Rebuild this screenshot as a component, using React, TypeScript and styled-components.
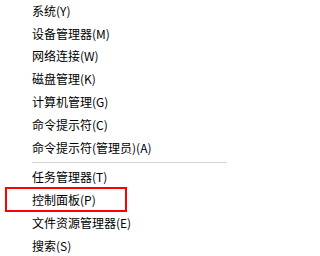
import React from 'react';
import styled, { createGlobalStyle } from 'styled-components';

const GlobalStyle = createGlobalStyle`
  html, body {
    margin: 0;
    padding: 0;
    background: #ffffff;
  }
`;

const Menu = styled.div`
  width: 229px;
  display: flex;
  flex-direction: column;
  margin-top: -1px;
  background: #ffffff;
  font-family: "Noto Sans CJK SC", "Microsoft YaHei", sans-serif;
  font-size: 12px;
  color: #000000;
`;

const MenuItem = styled.div<{ $marked?: boolean }>`
  position: relative;
  height: 22.8px;
  display: flex;
  align-items: center;
  padding-left: 32px;
  white-space: nowrap;

  &::after {
    content: '';
    display: ${(p) => (p.$marked ? 'block' : 'none')};
    position: absolute;
    left: 5px;
    top: -1px;
    width: 118px;
    height: 21px;
    border: 2px solid #ff0000;
  }
`;

const Separator = styled.div`
  height: 1px;
  margin: 3px 2px 3px 32px;
  background: #d4d4d4;
`;

const topItems = [
  '系统(Y)',
  '设备管理器(M)',
  '网络连接(W)',
  '磁盘管理(K)',
  '计算机管理(G)',
  '命令提示符(C)',
  '命令提示符(管理员)(A)',
];

const bottomItems = ['任务管理器(T)', '控制面板(P)', '文件资源管理器(E)', '搜索(S)'];

export default function App() {
  return (
    <>
      <GlobalStyle />
      <Menu>
        {topItems.map((label) => (
          <MenuItem key={label}>{label}</MenuItem>
        ))}
        <Separator />
        {bottomItems.map((label) => (
          <MenuItem key={label} $marked={label === '控制面板(P)'}>
            {label}
          </MenuItem>
        ))}
      </Menu>
    </>
  );
}
